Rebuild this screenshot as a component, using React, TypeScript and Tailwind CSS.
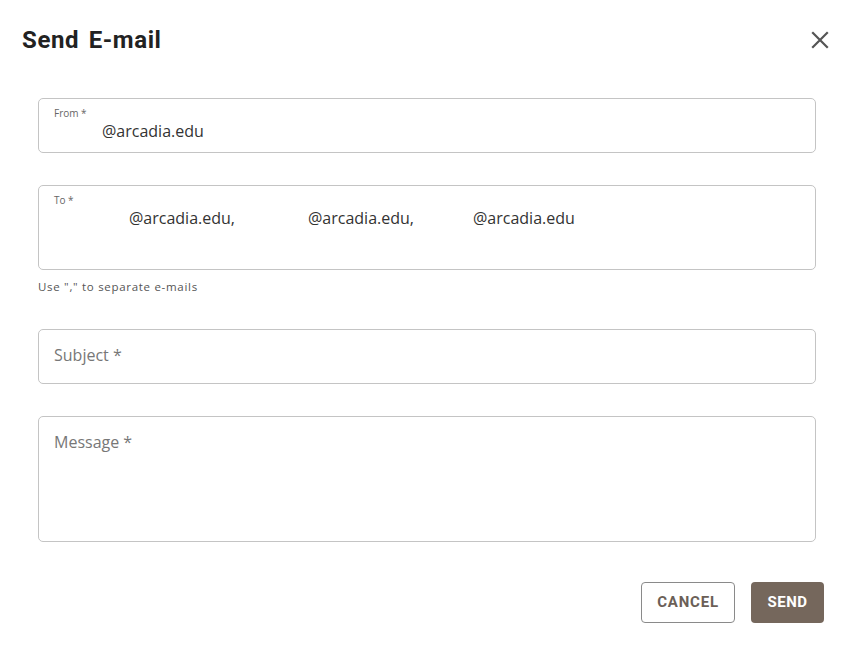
import React from "react";

export default function App() {
  return (
    <div className="w-[853px] h-[652px] bg-white relative" style={{ fontFamily: '"Open Sans", sans-serif' }}>
      <div className="flex items-center justify-between pl-[22px] pr-[24px] pt-[24px] h-[56px]">
        <h1 className="text-[24px] font-bold text-[#222] tracking-[0.6px]" style={{ fontFamily: 'Roboto, sans-serif', wordSpacing: '3px' }}>Send E-mail</h1>
        <svg width="18" height="18" viewBox="0 0 18 18" className="text-[#555]">
          <path d="M2 2 L16 16 M16 2 L2 16" stroke="currentColor" strokeWidth="2.2" strokeLinecap="square" />
        </svg>
      </div>
      <div className="pl-[38px] pr-[37px] pt-[42px] flex flex-col">
        <div className="h-[55px] border border-[#c4c4c4] rounded-[5px] pl-[15px] pt-[7px]">
          <div className="text-[10px] text-[#666] leading-[14px]">From *</div>
          <div className="text-[16px] text-[#333] leading-[22px]"><span className="inline-block w-[48px]"></span>@arcadia.edu</div>
        </div>
        <div className="mt-[32px] h-[85px] border border-[#c4c4c4] rounded-[5px] pl-[15px] pt-[7px]">
          <div className="text-[10px] text-[#666] leading-[14px]">To *</div>
          <div className="text-[16px] text-[#333] leading-[22px] whitespace-nowrap">
            <span className="inline-block w-[75px]"></span>@arcadia.edu,<span className="inline-block w-[73px]"></span>@arcadia.edu,<span className="inline-block w-[59px]"></span>@arcadia.edu
          </div>
        </div>
        <div className="text-[11.5px] text-[#555] mt-[9px] leading-[16px] tracking-[0.7px]">Use "," to separate e-mails</div>
        <div className="mt-[34px] h-[55px] border border-[#c4c4c4] rounded-[5px] pl-[15px] pb-[3px] flex items-center">
          <span className="text-[16px] text-[#777]">Subject *</span>
        </div>
        <div className="mt-[32px] h-[126px] border border-[#c4c4c4] rounded-[5px] pl-[15px] pt-[13px]">
          <span className="text-[16px] text-[#777]">Message *</span>
        </div>
      </div>
      <div className="flex justify-end gap-[16px] pr-[29px] mt-[40px]" style={{ fontFamily: 'Roboto, sans-serif' }}>
        <button className="w-[94px] h-[41px] border border-[#8a8a8a] rounded-[4px] bg-white text-[#6b5f57] font-bold text-[15px] tracking-[0.8px]">CANCEL</button>
        <button className="w-[73px] h-[41px] rounded-[4px] bg-[#75675c] text-white font-bold text-[15px] tracking-[0.5px]">SEND</button>
      </div>
    </div>
  );
}
